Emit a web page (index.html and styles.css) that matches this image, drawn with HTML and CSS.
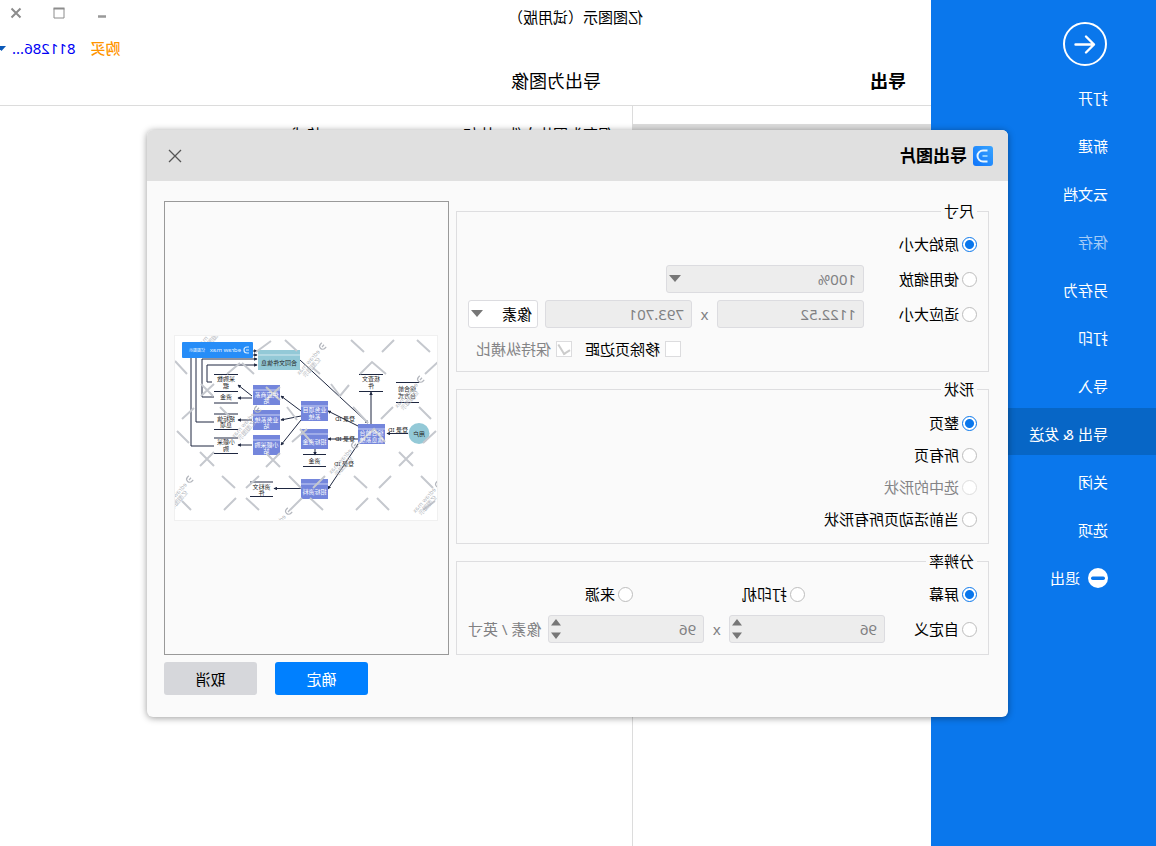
FILE: index.html
```html
<!DOCTYPE html>
<html lang="zh-CN">
<head>
<meta charset="utf-8">
<title>亿图图示（试用版）</title>
<link rel="stylesheet" href="styles.css">
</head>
<body>
<div class="app">
  <nav class="sidebar">
    <button class="back" aria-label="返回">
      <svg width="46" height="46" viewBox="0 0 46 46" fill="none" stroke="#fff" stroke-width="2" stroke-linecap="round" stroke-linejoin="round">
        <circle cx="23" cy="23" r="21"/>
        <path stroke-width="2.400" d="M32.500 23.500H14M22 15.500l-8 8 8 8"/>
      </svg>
    </button>
    <a class="nav-item" href="#">打开</a>
    <a class="nav-item" href="#">新建</a>
    <a class="nav-item" href="#">云文档</a>
    <a class="nav-item dim" href="#">保存</a>
    <a class="nav-item" href="#">另存为</a>
    <a class="nav-item" href="#">打印</a>
    <a class="nav-item" href="#">导入</a>
    <a class="nav-item active" href="#">导出 &amp; 发送</a>
    <a class="nav-item" href="#">关闭</a>
    <a class="nav-item" href="#">选项</a>
    <a class="nav-item" href="#">
      <svg width="20" height="20" viewBox="0 0 20 20"><circle cx="10" cy="10" r="10" fill="#fff"/><rect x="3" y="8.500" width="14" height="3.500" rx="1.700" fill="#0a77ec"/></svg>
      退出</a>
  </nav>

  <main class="main">
    <header class="titlebar">
      <span class="app-name">亿图图示（试用版）</span>
      <div class="win-buttons">
        <button aria-label="最小化"><svg width="12" height="12" viewBox="0 0 12 12"><path d="M2 9.500h8" stroke="#999" stroke-width="2.500"/></svg></button>
        <button aria-label="最大化"><svg width="12" height="12" viewBox="0 0 12 12" fill="none" stroke="#8c8c8c"><path d="M1 1.500h10v9.500H1z"/><path stroke-width="2" d="M.5 1.500h11"/></svg></button>
        <button aria-label="关闭窗口"><svg width="12" height="12" viewBox="0 0 12 12"><path d="M1.500 1.500l9 9M10.500 1.500l-9 9" stroke="#8c8c8c" stroke-width="2"/></svg></button>
      </div>
    </header>
    <div class="account">
      <a class="buy" href="#">购买</a>
      <a class="user" href="#">811286...</a>
      <svg width="7" height="5" viewBox="0 0 7 5"><path d="M1 0h9L5.500 5z" fill="#0a58b8"/></svg>
    </div>
    <div class="headings">
      <h1>导出</h1>
      <h2>导出为图像</h2>
    </div>
    <div class="columns">
      <div class="formats"><div class="format-selected"></div></div>
      <p class="hint">保存为图片文件，比如BMP, JPEG, PNG, GIF格式。</p>
    </div>
  </main>

  <div class="overlay">
    <section class="dialog" role="dialog" aria-labelledby="dialog-title">
      <header class="dialog-head">
        <svg width="20" height="20" viewBox="0 0 20 20">
          <defs><linearGradient id="logo" x1="0" y1="0" x2="1" y2="1"><stop offset="0" stop-color="#38a4ff"/><stop offset="1" stop-color="#0f74fa"/></linearGradient></defs>
          <rect width="20" height="20" rx="3" fill="url(#logo)"/>
          <path d="M5.500 4.500h4.500a5.500 5.500 0 0 1 0 11H5.500" fill="none" stroke="#e8f6ff" stroke-width="2"/>
          <path d="M5.500 10h5" stroke="#8fd0ff" stroke-width="2"/>
        </svg>
        <h3 id="dialog-title">导出图片</h3>
        <button class="close" aria-label="关闭"><svg width="14" height="14" viewBox="0 0 14 14"><path d="M1 1l12 12M13 1L1 13" stroke="#555" stroke-width="1.300"/></svg></button>
      </header>

      <form class="dialog-body">
        <div class="options">
          <fieldset class="fields">
            <legend>尺寸</legend>
            <div class="row"><label class="choice"><input type="radio" name="size" checked>原始大小</label></div>
            <div class="row">
              <label class="choice wide"><input type="radio" name="size">使用缩放</label>
              <span class="select zoom"><select aria-label="缩放" disabled><option>100%</option></select></span>
            </div>
            <div class="row">
              <label class="choice wide"><input type="radio" name="size">适应大小</label>
              <input class="field" type="text" aria-label="宽度" value="1122.52" disabled>
              <span class="times">x</span>
              <input class="field" type="text" aria-label="高度" value="793.701" disabled>
              <span class="select unit"><select aria-label="单位"><option>像素</option></select></span>
            </div>
            <div class="row checks">
              <label class="choice"><input type="checkbox">移除页边距</label>
              <label class="choice off"><input type="checkbox" checked disabled>保持纵横比</label>
            </div>
          </fieldset>

          <fieldset class="shapes">
            <legend>形状</legend>
            <label class="choice"><input type="radio" name="shape" checked>整页</label>
            <label class="choice"><input type="radio" name="shape">所有页</label>
            <label class="choice off"><input type="radio" name="shape" disabled>选中的形状</label>
            <label class="choice"><input type="radio" name="shape">当前活动页所有形状</label>
          </fieldset>

          <fieldset class="fields resolution">
            <legend>分辨率</legend>
            <div class="row thirds">
              <label class="choice"><input type="radio" name="dpi" checked>屏幕</label>
              <label class="choice"><input type="radio" name="dpi">打印机</label>
              <label class="choice"><input type="radio" name="dpi">来源</label>
            </div>
            <div class="row">
              <label class="choice narrow"><input type="radio" name="dpi">自定义</label>
              <span class="spin"><input class="field" type="number" aria-label="水平分辨率" value="96" disabled>
                <svg width="10" height="20" viewBox="0 0 10 20" fill="#777"><path d="M0 6.500L5 0l5 6.500zM0 13.500h10L5 20z"/></svg></span>
              <span class="times">x</span>
              <span class="spin"><input class="field" type="number" aria-label="垂直分辨率" value="96" disabled>
                <svg width="10" height="20" viewBox="0 0 10 20" fill="#777"><path d="M0 6.500L5 0l5 6.500zM0 13.500h10L5 20z"/></svg></span>
              <span class="suffix">像素 / 英寸</span>
            </div>
          </fieldset>
        </div>

        <div class="preview">
          <svg class="page" width="264" height="186" viewBox="0 0 264 186" role="img" aria-label="预览">
            <defs>
              <marker id="tip" viewBox="0 0 6 6" refX="5" refY="3" markerWidth="3.500" markerHeight="3.500" markerUnits="userSpaceOnUse" orient="auto"><path d="M0 0l6 3-6 3z" fill="#1e2740"/></marker>
              <g id="box"><rect width="27" height="20" fill="#7486dc"/><path d="M0 5h27" stroke="#dfe4fa" stroke-width=".8"/></g>
              <g id="mark"><path d="M-3-3h2a3 3 0 0 1 0 6h-2M-3 0h3" fill="none" stroke="#b4b7be" stroke-width="1.200"/><text x="5" y="2" class="wm">edraw max</text><text x="10" y="8" class="wm">亿图图示</text></g>
            </defs>
            <rect width="264" height="186" fill="#fff"/>
            <g fill="none" stroke="#1e2740" stroke-width="1">
              <path d="M226 47h5V30H181" marker-end="url(#tip)"/>
              <path d="M224 62h12V24H181" marker-end="url(#tip)"/>
              <path d="M224 87h18V20H181" marker-end="url(#tip)"/>
              <path d="M224 111h23V16H181" marker-end="url(#tip)"/>
              <path d="M138 25L70 88" marker-end="url(#tip)"/>
              <path d="M67 89V57" marker-end="url(#tip)"/>
              <path d="M30 98.500h21" marker-end="url(#tip)"/>
              <path d="M80 91l30-15" marker-end="url(#tip)"/>
              <path d="M80 104h30" marker-end="url(#tip)"/>
              <path d="M80 109l30 45" marker-end="url(#tip)"/>
              <path d="M137 76l20-15" marker-end="url(#tip)"/>
              <path d="M137 81l20 4" marker-end="url(#tip)"/>
              <path d="M137 85l20 25" marker-end="url(#tip)"/>
              <path d="M186 61l14-11" marker-end="url(#tip)"/>
              <path d="M186 63h14" marker-end="url(#tip)"/>
              <path d="M186 85h14" marker-end="url(#tip)"/>
              <path d="M186 110h14" marker-end="url(#tip)"/>
              <path d="M137 153.500h27" marker-end="url(#tip)"/>
              <path d="M123 114v6" marker-end="url(#tip)"/>
              <path d="M19 47.500h23M19 67.500h23M55 39.500h24M55 56.500h24M112 119.500h23M112 131.500h23M165 147h23M165 161.500h23M200 39.500h24M200 56.500h24M200 68h24M200 79h24M200 94.500h24M200 103h24M200 118.500h24"/>
            </g>
            <circle cx="19" cy="98.500" r="10.500" fill="#93c9d7"/>
            <rect x="138" y="15" width="42" height="20" fill="#93c9d7"/><path d="M138 20h42" stroke="#e4f3f6" stroke-width=".8"/>
            <use href="#box" x="53" y="89"/><use href="#box" x="110" y="66"/><use href="#box" x="110" y="94"/><use href="#box" x="110" y="144"/>
            <use href="#box" x="158" y="50"/><use href="#box" x="158" y="75"/><use href="#box" x="158" y="100"/>
            <g fill="none" stroke="#c5c8ce" stroke-width="2">
              <path d="M153 5l-12 11M182 17L167 6M263 26l-12 13M196 28l-12 11M211 39l-13-11M237 49l-12 12M224 49l13 12M256 84l-12-11M218 72l-13 13M261 96l-12 12M238 117l-14 14M224 117l14 14M172 118l-14 14M158 118l14 14M216 141l-13 12M149 141l-12 12M179 141l13 12M256 166l-9 9M214 175l-12-12M192 163l-13 12M136 163l12 12M172 52l-14 13M158 52l14 13M151 72l-10 13M146 107l-15-13"/>
              <path d="M87 5L74 17M44 5l12 12M21 5L8 17M0 27l13 12M125 33l-7 6M78 39L66 27 52 39M107 49l-9 12-9-11M85 72L70 88M57 84L45 72M19 72L7 84M2 96l13 12M39 117l-14 14M25 117l14 14M84 141l-13 12M47 141l12 12M17 141L5 153M125 153l-12-12M128 163l-13 12M70 163l12 12M61 163l-12 12M80 109L64 94 53 107M3 166l12 9M138 94l-12 14"/>
            </g>
            <g class="cap light">
              <text x="66.500" y="100">综合前台</text><text x="66.500" y="107">信息系统</text>
              <text x="123.500" y="77">业务项目</text><text x="123.500" y="84">系统</text>
              <text x="123.500" y="109">招标资金</text>
              <text x="123.500" y="159">招标资料</text>
              <text x="171.500" y="62">供应商系</text><text x="171.500" y="68">站</text>
              <text x="171.500" y="87">业务系统</text><text x="171.500" y="93">站</text>
              <text x="171.500" y="112">小额采购</text><text x="171.500" y="118">站</text>
            </g>
            <g class="cap">
              <text x="19" y="100.500">用户</text>
              <text x="159" y="30">合同文件信息</text>
              <text x="31" y="56">综合前</text><text x="31" y="63">台方式</text>
              <text x="67" y="46">核查文</text><text x="67" y="53">件</text>
              <text x="123.500" y="128">资金</text>
              <text x="212" y="46">采购数</text><text x="212" y="53">据</text>
              <text x="212" y="64">资金</text>
              <text x="212" y="86">招标信</text><text x="212" y="92">息项</text>
              <text x="212" y="109">小额采</text><text x="212" y="116">购</text>
              <text x="176.500" y="154">资料文</text><text x="176.500" y="160">件</text>
              <text x="40" y="97">登录 ID</text><text x="93" y="86">登录 ID</text><text x="93" y="106">登录 ID</text><text x="94" y="131">登录 ID</text>
            </g>
            <use href="#mark" transform="translate(116 12) rotate(48)"/>
            <use href="#mark" transform="translate(18 45) rotate(48)"/>
            <use href="#mark" transform="translate(84 111) rotate(48)"/>
            <use href="#mark" transform="translate(181 75) rotate(48)"/>
            <use href="#mark" transform="translate(249 145) rotate(48)"/>
            <use href="#mark" transform="translate(150 177) rotate(48)"/>
            <use href="#mark" transform="translate(0 150) rotate(48)"/>
            <use href="#mark" transform="translate(215 -16) rotate(48)"/>
            <rect x="185" y="7" width="71" height="16" rx="1" fill="#268df8"/>
            <path d="M189 12h2a3 3 0 0 1 0 6h-2M189 15h3" fill="none" stroke="#d5ebff" stroke-width="1.200"/>
            <text x="197" y="17" class="badge">edraw max</text><text x="233" y="17" class="badge small">亿图图示</text>
            <rect x=".5" y=".5" width="263" height="185" fill="none" stroke="#f0f0f0"/>
          </svg>
        </div>

        <div class="actions">
          <button type="button" class="primary">确定</button>
          <button type="button" class="secondary">取消</button>
        </div>
      </form>
    </section>
  </div>
</div>
</body>
</html>
```

FILE: styles.css
```css
* { box-sizing: border-box; }

body {
  margin: 0;
  overflow: hidden;
  font: 15px/20px "Noto Sans", "Noto Sans CJK SC", sans-serif;
  color: #000;
}

button, input, select { font: inherit; color: inherit; }
button { border: 0; background: none; padding: 0; }
a { text-decoration: none; color: inherit; }
h1, h2, h3, p { margin: 0; }
svg { display: block; flex: none; }

/* The whole window is shown mirrored left to right. */
.app {
  position: relative;
  display: flex;
  min-height: 100vh;
  background: #fff;
  transform: scaleX(-1);
}

/* Sidebar */
.sidebar {
  flex: none;
  width: 225px;
  padding-top: 21px;
  background: #0a77ec;
  color: #fff;
}
.back { display: block; margin: 0 0 5px 48px; }
.nav-item {
  display: flex;
  align-items: center;
  gap: 8px;
  height: 47px;
  margin-bottom: 1px;
  padding: 4px 0 0 48px;
}
.nav-item.dim { color: #a4cbf7; }
.nav-item.active { background: #0766c6; }

/* Main window */
.main { flex: 1; min-width: 0; display: flex; flex-direction: column; }
.titlebar {
  display: flex;
  justify-content: space-between;
  height: 33px;
  padding: 7px 10px 0 288px;
}
.win-buttons { display: flex; gap: 31px; }
.win-buttons button { height: 12px; }
.account {
  display: flex;
  align-items: center;
  justify-content: flex-end;
  height: 30px;
}
.buy { color: #ff9500; font-weight: 500; margin-right: 15px; }
.user { color: #0000f5; margin-right: 5px; }
.headings {
  display: flex;
  height: 43px;
  padding: 6px 0 0 25px;
  border-bottom: 1px solid #dcdcdc;
}
.headings h1, .headings h2 { font-size: 18px; line-height: 24px; }
.headings h1 { width: 305px; }
.headings h2 { font-weight: 400; }
.columns { flex: 1; display: flex; }
.formats { width: 299px; padding-top: 18px; border-right: 1px solid #dcdcdc; }
.format-selected { height: 48px; background: #dcdcdc; }
.hint { padding: 18px 0 0 19px; }

/* Dialog */
.overlay {
  position: absolute;
  inset: 0;
  display: flex;
  justify-content: center;
  align-items: flex-start;
  padding: 130px 0 0 1px;
}
.dialog {
  width: 861px;
  border-radius: 6px;
  background: #fafafa;
  box-shadow: 0 1px 7px rgba(0, 0, 0, .4);
}
.dialog-head {
  display: flex;
  align-items: center;
  height: 51px;
  padding: 0 21px 0 15px;
  border-radius: 6px 6px 0 0;
  background: #e0e0e0;
}
.dialog-head h3 { flex: 1; margin-left: 6px; font-size: 17px; }
.dialog-body {
  display: grid;
  grid-template-columns: 1fr 285px;
  gap: 7px;
  padding: 20px 17px 22px 19px;
}
.options { display: flex; flex-direction: column; gap: 7px; }

fieldset {
  min-width: 0;
  margin: 0;
  padding: 9px 11px 8px 11px;
  border: 1px solid #dedee0;
}
legend { padding: 0 3px; line-height: 20px; }
.fields { display: grid; gap: 7px; }
.resolution { padding-bottom: 11px; }
.shapes { display: flex; flex-direction: column; padding-top: 8px; }
.shapes .choice { height: 32px; }

.row { display: flex; align-items: center; height: 28px; }
.choice { display: flex; align-items: center; gap: 3px; }
.choice.wide { width: 113px; }
.choice.narrow { width: 92px; }
.choice.off { color: #848486; }
.thirds { display: grid; grid-template-columns: 172px 172px 1fr; }
.checks { justify-content: flex-end; gap: 13px; padding-right: 8px; }
.checks .choice { gap: 5px; }

input[type="radio"], input[type="checkbox"] {
  appearance: none;
  flex: none;
  margin: 0;
  background: #fff;
}
input[type="radio"] {
  width: 15px;
  height: 15px;
  border: 1px solid #bdbdbd;
  border-radius: 50%;
}
input[type="radio"]:checked {
  border-color: #0a77ec;
  background: radial-gradient(circle, #0a77ec 0 4px, #fff 5px);
}
input[type="radio"]:disabled { border-color: #dedede; }
input[type="checkbox"] { width: 16px; height: 16px; border: 1px solid #dcdcde; }
input[type="checkbox"]:checked { display: grid; place-items: center; }
input[type="checkbox"]:checked::before {
  content: "";
  width: 6px;
  height: 10px;
  margin-bottom: 2px;
  border: solid #ccc;
  border-width: 0 2px 2px 0;
  transform: rotate(32deg);
}

.field, select {
  appearance: none;
  width: 100%;
  min-width: 0;
  height: 28px;
  margin: 0;
  padding: 0 7px;
  border: 1px solid #dcdce0;
  border-radius: 3px;
  background: #fff;
}
.field:disabled, select:disabled { background: #ededed; color: #808082; opacity: 1; }
.row > .field { flex: 1; }
input[type="number"] { appearance: textfield; }
.times, .suffix { color: #808082; }
.times { flex: none; width: 25px; text-align: center; }
.suffix { flex: none; margin-left: 7px; }

.select { position: relative; flex: none; }
.select::after {
  content: "";
  position: absolute;
  right: 3px;
  top: 10px;
  border: solid transparent;
  border-width: 7px 6px 0;
  border-top-color: #777;
  pointer-events: none;
}
.zoom { width: 198px; }
.unit { width: 70px; margin-left: 7px; }
.unit select { padding: 0 5px; }
.spin { position: relative; flex: 1; }
.spin svg { position: absolute; right: 3px; top: 4px; }

.preview {
  display: flex;
  align-items: center;
  justify-content: center;
  border: 1px solid #999;
}
.cap { font-size: 6px; text-anchor: middle; fill: #222; }
.light { fill: #fff; }
.wm { font-size: 6px; fill: #b4b7be; }
.badge { font-size: 6px; fill: #e3f2ff; }
.small { font-size: 4px; }

.actions { grid-column: 2; display: flex; justify-content: flex-end; gap: 18px; }
.actions button { width: 93px; height: 33px; border-radius: 3px; }
.primary { background: #0080ff; color: #fff; }
.secondary { background: #d6d7db; }
```
